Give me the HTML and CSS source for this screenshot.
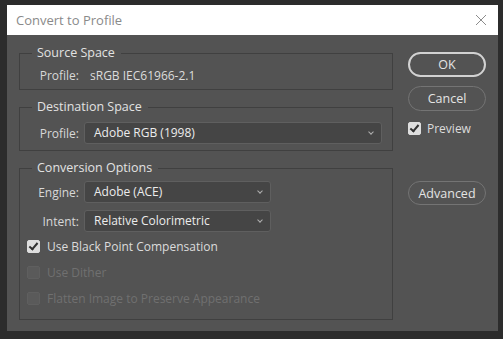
FILE: index.html
```html
<!DOCTYPE html>
<html lang="en">

<head>
    <meta charset="UTF-8">
    <title>Convert to Profile</title>
    <link rel="stylesheet" href="styles.css">
</head>

<body>
    <div class="dialog">
        <div class="titlebar">
            <span class="title">Convert to Profile</span>
            <svg class="close" width="12" height="12" viewBox="0 0 12 12">
                <path d="M1 1 L11 11 M11 1 L1 11" stroke="#8c8c8c" stroke-width="1" fill="none" />
            </svg>
        </div>
        <div class="content">
            <div class="left-column">
                <fieldset class="group source">
                    <legend>Source Space</legend>
                    <div class="row">
                        <span class="label short">Profile:</span>
                        <span class="value">sRGB IEC61966-2.1</span>
                    </div>
                </fieldset>

                <fieldset class="group destination">
                    <legend>Destination Space</legend>
                    <div class="row">
                        <span class="label">Profile:</span>
                        <div class="select wide">Adobe RGB (1998)<span class="chevron"></span></div>
                    </div>
                </fieldset>

                <fieldset class="group options">
                    <legend>Conversion Options</legend>
                    <div class="row">
                        <span class="label">Engine:</span>
                        <div class="select">Adobe (ACE)<span class="chevron"></span></div>
                    </div>
                    <div class="row">
                        <span class="label">Intent:</span>
                        <div class="select">Relative Colorimetric<span class="chevron"></span></div>
                    </div>
                    <div class="check-row first">
                        <span class="checkbox checked"></span>
                        <span>Use Black Point Compensation</span>
                    </div>
                    <div class="check-row disabled">
                        <span class="checkbox"></span>
                        <span>Use Dither</span>
                    </div>
                    <div class="check-row disabled">
                        <span class="checkbox"></span>
                        <span>Flatten Image to Preserve Appearance</span>
                    </div>
                </fieldset>
            </div>

            <div class="right-column">
                <button class="buttons default">OK</button>
                <button class="buttons">Cancel</button>
                <div class="check-row preview">
                    <span class="checkbox checked"></span>
                    <span>Preview</span>
                </div>
                <button class="buttons advanced">Advanced</button>
            </div>
        </div>
    </div>
</body>

</html>
```

FILE: styles.css
```css
* {
    margin: 0;
    padding: 0;
    box-sizing: border-box;
}

body {
    width: 503px;
    height: 339px;
    background-color: #2c2c2c;
    font-family: 'Open Sans', 'Noto Sans', sans-serif;
    font-size: 12px;
    color: #dcdcdc;
    overflow: hidden;
}

.dialog {
    margin: 5px 0 0 7px;
    width: 491px;
    height: 326px;
    background-color: #535353;
}

.titlebar {
    height: 30px;
    background-color: #ffffff;
    display: flex;
    align-items: center;
    justify-content: space-between;
    padding: 0 11px 0 9px;
}

.title {
    color: #8a8a8a;
    font-size: 13px;
}

.content {
    display: flex;
    padding: 10px 0 0 12px;
}

.left-column {
    width: 374px;
    display: flex;
    flex-direction: column;
    gap: 9px;
}

.group {
    border: 1px solid #404040;
    padding: 0 10px 0 10px;
}

.group legend {
    margin-left: 2px;
    padding: 0 6px 0 5px;
    font-size: 12.5px;
    line-height: 16px;
    color: #e2e2e2;
}

.source {
    height: 45px;
}

.source .row {
    margin-top: 3px;
}

.destination {
    height: 52px;
}

.destination .row {
    margin-top: 7px;
}

.options {
    height: 160px;
}

.options .row {
    margin-top: 5px;
}

.options .row + .row {
    margin-top: 7px;
}

.row {
    display: flex;
    align-items: center;
    height: 22px;
}

.label {
    width: 49px;
    text-align: right;
    margin-right: 5px;
    color: #d8d8d8;
}

.label.short {
    margin-right: 11px;
}

.value {
    color: #dcdcdc;
}

.select {
    position: relative;
    width: 187px;
    height: 22px;
    line-height: 20px;
    background-color: #454545;
    border: 1px solid #5f5f5f;
    border-radius: 3px;
    padding-left: 9px;
    color: #ececec;
}

.select.wide {
    width: 298px;
}

.chevron {
    position: absolute;
    right: 8px;
    top: 7px;
    width: 4px;
    height: 4px;
    border-right: 1px solid #b0b0b0;
    border-bottom: 1px solid #b0b0b0;
    transform: rotate(45deg);
}

.check-row {
    display: flex;
    align-items: center;
    height: 26px;
    gap: 7px;
}

.options .check-row {
    margin-left: -3px;
}

.options .check-row.first {
    margin-top: 1px;
}

.checkbox {
    position: relative;
    width: 13px;
    height: 13px;
    border-radius: 2px;
    background-color: #5a5a5a;
    border: 1px solid #5f5f5f;
}

.checkbox.checked {
    background-color: #dedede;
    border-color: #dedede;
}

.checkbox.checked::after {
    content: "";
    position: absolute;
    left: 3px;
    top: 0px;
    width: 3px;
    height: 7px;
    border-right: 2px solid #303030;
    border-bottom: 2px solid #303030;
    transform: rotate(40deg);
}

.check-row.disabled {
    color: #707070;
}

.right-column {
    display: flex;
    flex-direction: column;
    margin: 7px 0 0 15px;
    width: 78px;
}

.buttons {
    width: 78px;
    height: 25px;
    border-radius: 13px;
    border: 1px solid #747474;
    background-color: #535353;
    color: #e4e4e4;
    font-family: 'Open Sans', 'Noto Sans', sans-serif;
    font-size: 12.5px;
    margin-bottom: 9px;
}

.buttons.default {
    border: 2px solid #d2d2d2;
}

.preview {
    height: 12px;
    margin-top: 2px;
    gap: 6px;
}

.advanced {
    height: 24px;
    margin-top: 47px;
}
```
